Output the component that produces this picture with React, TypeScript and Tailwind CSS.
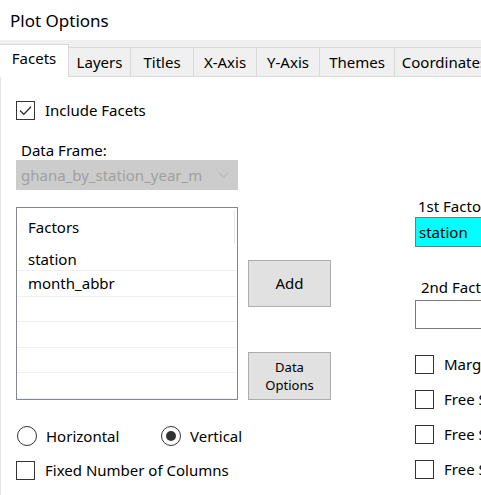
import React from "react";

const tabs = ["Facets", "Layers", "Titles", "X-Axis", "Y-Axis", "Themes", "Coordinates"];
const tabWidths = ["w-[69px]", "w-[62px]", "w-[63px]", "w-[63px]", "w-[63px]", "w-[75px]", "w-[100px]"];

function CheckBox({ checked = false, label }: { checked?: boolean; label: string }) {
  return (
    <div className="flex items-center h-[19px]">
      <div className="w-[19px] h-[19px] border border-[#333333] bg-white flex items-center justify-center shrink-0">
        {checked && (
          <svg viewBox="0 0 17 17" className="w-[17px] h-[17px]" fill="none">
            <path d="M3 8.5 L6.8 12.3 L14 4.8" stroke="#333333" strokeWidth="1.3" />
          </svg>
        )}
      </div>
      <span className="ml-[10px] whitespace-nowrap">{label}</span>
    </div>
  );
}

function Radio({ checked = false, label }: { checked?: boolean; label: string }) {
  return (
    <div className="flex items-center h-[20px]">
      <div className="w-[20px] h-[20px] rounded-full border border-[#333333] bg-white flex items-center justify-center shrink-0">
        {checked && <div className="w-[10px] h-[10px] rounded-full bg-[#333333]" />}
      </div>
      <span className="ml-[9px] whitespace-nowrap">{label}</span>
    </div>
  );
}

export default function App() {
  return (
    <div className="w-[481px] h-[495px] overflow-hidden bg-white text-[15px] text-black font-['Segoe_UI','Noto_Sans',sans-serif] leading-none">
      {/* title bar */}
      <div className="h-[40px] pl-[10px] flex items-center text-[17px]">Plot Options</div>

      {/* tab strip */}
      <div className="h-[37px] bg-[#f0f0f0] flex items-end border-b border-[#d9d9d9] pt-[4px]">
        {tabs.map((t, i) =>
          i === 0 ? (
            <div
              key={t}
              className={`${tabWidths[i]} h-[33px] -mb-px bg-white border-t border-r border-[#d9d9d9] flex items-center justify-center pb-[5px] shrink-0`}
            >
              {t}
            </div>
          ) : (
            <div
              key={t}
              className={`${tabWidths[i]} h-[29px] bg-[#f0f0f0] border-t border-r border-[#d9d9d9] flex items-center justify-center shrink-0 whitespace-nowrap`}
            >
              {t}
            </div>
          )
        )}
      </div>

      {/* tab page */}
      <div className="flex border-l border-[#e3e3e3] h-[418px]">
        {/* left column */}
        <div className="flex flex-col pl-[15px] w-[414px] shrink-0">
          <div className="mt-[24px]">
            <CheckBox checked label="Include Facets" />
          </div>
          <div className="mt-[22px] ml-[5px] h-[16px] flex items-center">Data Frame:</div>
          <div className="mt-[2px] w-[222px] h-[30px] bg-[#cccccc] border border-[#cccccc] flex items-center justify-between pl-[4px] pr-[8px] text-[#a0a0a0]">
            <span className="whitespace-nowrap">ghana_by_station_year_m</span>
            <svg viewBox="0 0 12 8" className="w-[11px] h-[7px]" fill="none">
              <path d="M1 1 L6 6 L11 1" stroke="#a8a8a8" strokeWidth="1" />
            </svg>
          </div>

          <div className="mt-[17px] flex">
            {/* list view */}
            <div className="w-[222px] h-[193px] border border-[#828790] bg-white flex flex-col overflow-hidden">
              <div className="h-[37px] flex items-center pl-[11px] pt-[2px] relative shrink-0">
                Factors
                <div className="absolute right-[2px] top-[3px] h-[33px] w-px bg-[#e5e5e5]" />
              </div>
              <div className="h-[26px] flex items-center pl-[11px] pt-[3px] border-b border-[#f0f0f0] shrink-0">station</div>
              <div className="h-[26px] flex items-center pl-[11px] border-b border-[#f0f0f0] shrink-0">month_abbr</div>
              <div className="h-[25px] border-b border-[#f0f0f0] shrink-0" />
              <div className="h-[26px] border-b border-[#f0f0f0] shrink-0" />
              <div className="h-[25px] border-b border-[#f0f0f0] shrink-0" />
              <div className="h-[26px] border-b border-[#f0f0f0] shrink-0" />
            </div>

            {/* buttons */}
            <div className="ml-[10px] flex flex-col">
              <button className="mt-[53px] w-[83px] h-[47px] bg-[#e1e1e1] border border-[#adadad] flex items-center justify-center">
                Add
              </button>
              <button className="mt-[45px] w-[83px] h-[48px] bg-[#e1e1e1] border border-[#adadad] flex flex-col items-center justify-center text-[13px] leading-[18px]">
                <span>Data</span>
                <span>Options</span>
              </button>
            </div>
          </div>

          <div className="mt-[26px] flex items-center">
            <div className="w-[144px] ml-px">
              <Radio label="Horizontal" />
            </div>
            <Radio checked label="Vertical" />
          </div>

          <div className="mt-[15px]">
            <CheckBox label="Fixed Number of Columns" />
          </div>
        </div>

        {/* right column */}
        <div className="flex flex-col w-[120px] shrink-0">
          <div className="mt-[121px] ml-[3px] h-[16px] flex items-center whitespace-nowrap">1st Factor</div>
          <div className="mt-[3px] h-[30px] border border-[#7a7a7a] bg-[#00ffff] flex items-center pl-[3px]">
            station
          </div>
          <div className="mt-[32px] ml-[6px] h-[16px] flex items-center whitespace-nowrap">2nd Factor</div>
          <div className="mt-[5px] h-[29px] border border-[#7a7a7a] bg-white" />
          <div className="mt-[26px] flex flex-col gap-[16px]">
            <CheckBox label="Margins" />
            <CheckBox label="Free Scales X" />
            <CheckBox label="Free Scales Y" />
            <CheckBox label="Free Space" />
          </div>
        </div>
      </div>
    </div>
  );
}
